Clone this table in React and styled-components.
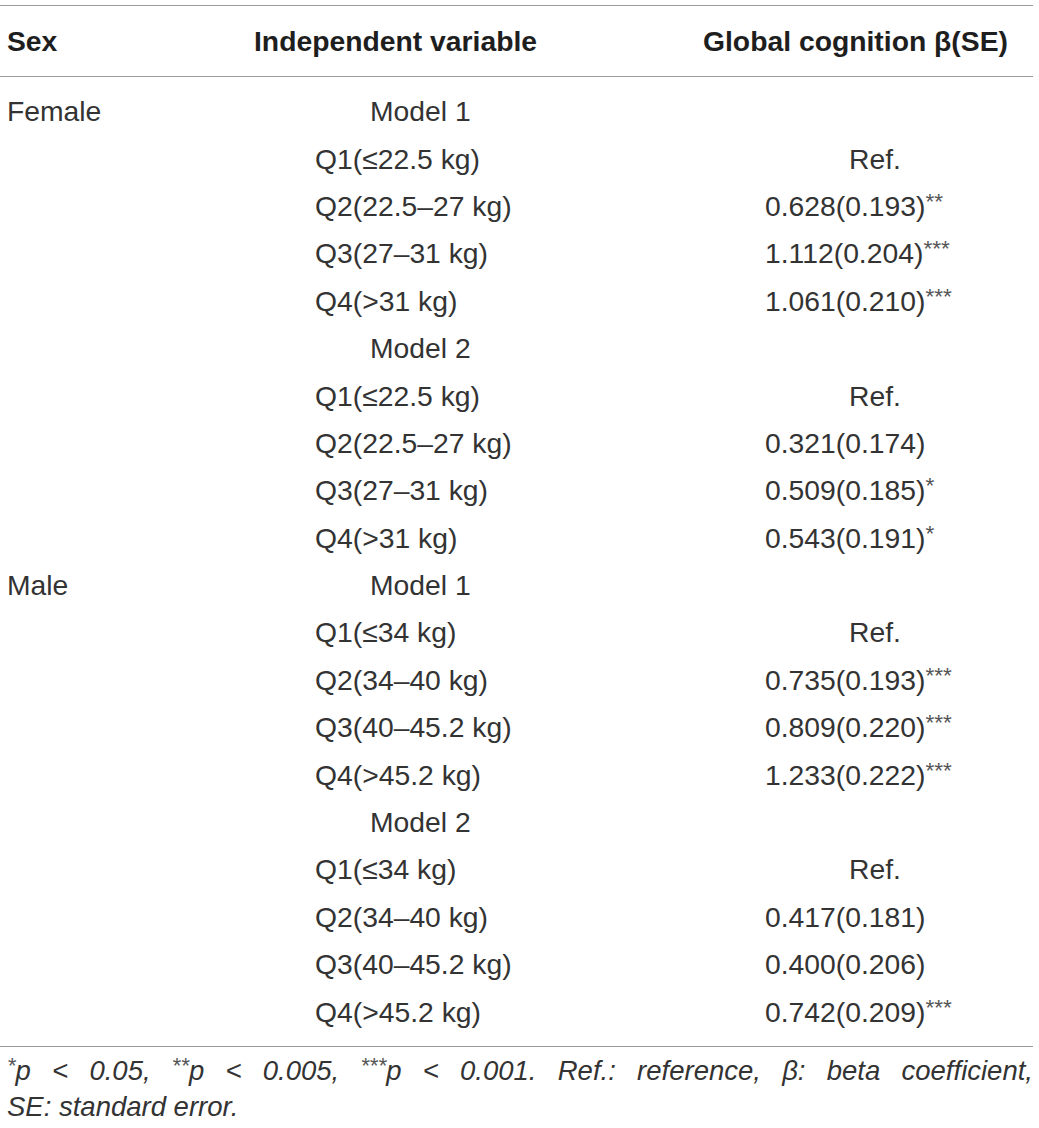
import React from 'react'
import styled, { createGlobalStyle } from 'styled-components'

const GlobalStyle = createGlobalStyle`
body{
    margin:0;
    background:#fff;
    font-family:"Liberation Sans", Arial, sans-serif;
    color:#333;
}
`

const groups = [
    {
        sex: 'Female',
        models: [
            {
                name: 'Model 1',
                rows: [
                    ['Q1(≤22.5 kg)', 'Ref.', ''],
                    ['Q2(22.5–27 kg)', '0.628(0.193)', '**'],
                    ['Q3(27–31 kg)', '1.112(0.204)', '***'],
                    ['Q4(>31 kg)', '1.061(0.210)', '***'],
                ],
            },
            {
                name: 'Model 2',
                rows: [
                    ['Q1(≤22.5 kg)', 'Ref.', ''],
                    ['Q2(22.5–27 kg)', '0.321(0.174)', ''],
                    ['Q3(27–31 kg)', '0.509(0.185)', '*'],
                    ['Q4(>31 kg)', '0.543(0.191)', '*'],
                ],
            },
        ],
    },
    {
        sex: 'Male',
        models: [
            {
                name: 'Model 1',
                rows: [
                    ['Q1(≤34 kg)', 'Ref.', ''],
                    ['Q2(34–40 kg)', '0.735(0.193)', '***'],
                    ['Q3(40–45.2 kg)', '0.809(0.220)', '***'],
                    ['Q4(>45.2 kg)', '1.233(0.222)', '***'],
                ],
            },
            {
                name: 'Model 2',
                rows: [
                    ['Q1(≤34 kg)', 'Ref.', ''],
                    ['Q2(34–40 kg)', '0.417(0.181)', ''],
                    ['Q3(40–45.2 kg)', '0.400(0.206)', ''],
                    ['Q4(>45.2 kg)', '0.742(0.209)', '***'],
                ],
            },
        ],
    },
]

const App = () => {
    const body = []
    groups.forEach((g) => {
        g.models.forEach((m, mi) => {
            body.push(
                <Row key={g.sex + m.name}>
                    <Cell $pad={7}>{mi === 0 ? g.sex : ''}</Cell>
                    <Cell $pad={116}>{m.name}</Cell>
                    <Cell />
                </Row>
            )
            m.rows.forEach((r) => {
                body.push(
                    <Row key={g.sex + m.name + r[0]}>
                        <Cell />
                        <Cell $pad={61}>{r[0]}</Cell>
                        <Cell $pad={r[1] === 'Ref.' ? 146 : 62}>
                            {r[1]}
                            {r[2] && <Star>{r[2]}</Star>}
                        </Cell>
                    </Row>
                )
            })
        })
    })

    return (
        <Page>
            <GlobalStyle />
            <Table>
                <colgroup>
                    <col style={{ width: 254 }} />
                    <col style={{ width: 449 }} />
                    <col style={{ width: 330 }} />
                </colgroup>
                <Head>
                    <tr>
                        <HeadCell $pad={7}>Sex</HeadCell>
                        <HeadCell $pad={0}>Independent variable</HeadCell>
                        <HeadCell $pad={0}>Global cognition β(SE)</HeadCell>
                    </tr>
                </Head>
                <Body>
                    <Spacer><td colSpan={3} /></Spacer>
                    {body}
                    <Spacer><td colSpan={3} /></Spacer>
                </Body>
            </Table>
            <Note>
                <NoteLine $full>
                    <Star>*</Star>p &lt; 0.05, <Star>**</Star>p &lt; 0.005, <Star>***</Star>p &lt; 0.001. Ref.: reference, β: beta coefficient,
                </NoteLine>
                <NoteLine>SE: standard error.</NoteLine>
            </Note>
        </Page>
    )
}

export default App

const Page = styled.div`
width:1033px;
padding-top:5px;
`

const Table = styled.table`
width:1033px;
border-collapse:collapse;
table-layout:fixed;
border-top:1px solid #9a9a9a;
border-bottom:1px solid #9a9a9a;
`

const Head = styled.thead`
border-bottom:1px solid #9a9a9a;
`

const HeadCell = styled.th`
height:70px;
padding:0 0 0 ${p => p.$pad}px;
text-align:left;
font-size:28.3px;
font-weight:bold;
color:#1e1e1e;
white-space:nowrap;
`

const Body = styled.tbody``

const Spacer = styled.tr`
height:11px;
`

const Row = styled.tr`
height:47.4px;
`

const Cell = styled.td`
padding:0 0 0 ${p => p.$pad || 0}px;
font-size:28.3px;
line-height:30px;
white-space:nowrap;
color:#333;
`

const Star = styled.sup`
font-size:0.8em;
vertical-align:0.32em;
line-height:0;
color:#555;
`

const Note = styled.div`
margin:6px 0 0;
padding:0 0 0 7px;
font-size:27.5px;
line-height:36px;
font-style:italic;
color:#333;
`

const NoteLine = styled.div`
white-space:nowrap;
text-align:${p => (p.$full ? 'justify' : 'left')};
text-align-last:${p => (p.$full ? 'justify' : 'left')};
${p => p.$full && 'white-space:normal;'}
`
